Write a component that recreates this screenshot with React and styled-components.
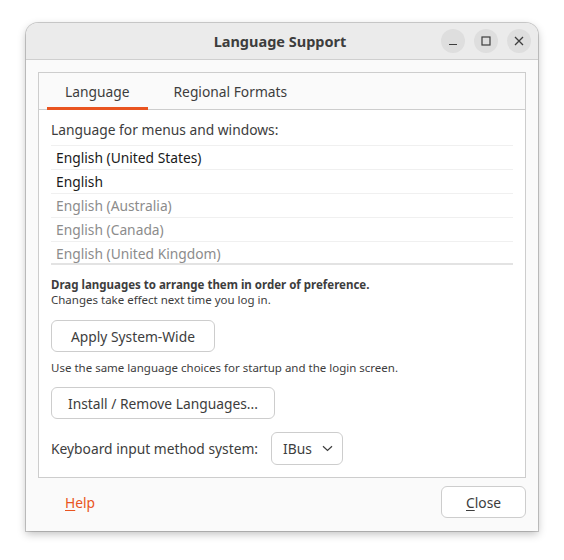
import styled, { createGlobalStyle } from "styled-components";

const GlobalStyle = createGlobalStyle`
  html, body {
    margin: 0;
    padding: 0;
    background: #ffffff;
  }
  body {
    font-family: "Noto Sans", "Open Sans", sans-serif;
    color: #3d3d3d;
  }
`;

const ACCENT = "#e95420";
const TEXT_SIZE = "13.8px";

const languages = [
  { name: "English (United States)", active: true },
  { name: "English", active: true },
  { name: "English (Australia)", active: false },
  { name: "English (Canada)", active: false },
  { name: "English (United Kingdom)", active: false },
];

const Page = styled.div`
  padding: 23px 26px 29px;
`;

const Window = styled.div`
  width: 512px;
  height: 508px;
  display: flex;
  flex-direction: column;
  background: #fafafa;
  border-radius: 12px 12px 0 0;
  box-shadow: 0 0 0 1px rgba(0, 0, 0, 0.18), 0 3px 9px rgba(0, 0, 0, 0.25);
  overflow: hidden;
`;

const HeaderBar = styled.div`
  position: relative;
  height: 37px;
  flex-shrink: 0;
  display: flex;
  align-items: center;
  justify-content: center;
  padding-right: 4px;
  padding-bottom: 1px;
  box-sizing: border-box;
  background: #ebebeb;
  border-bottom: 1px solid #cfcfcf;
`;

const Title = styled.div`
  font-size: 14.5px;
  font-weight: 700;
  color: #3d3d3d;
`;

const WindowControls = styled.div`
  position: absolute;
  right: 7px;
  top: 6px;
  display: flex;
  gap: 9px;
`;

const ControlButton = styled.div`
  width: 24px;
  height: 24px;
  border-radius: 50%;
  background: #dedede;
  display: flex;
  align-items: center;
  justify-content: center;
  color: #3d3d3d;
`;

const Body = styled.div`
  flex: 1;
  display: flex;
  flex-direction: column;
  padding: 12px 12px 0;
`;

const Notebook = styled.div`
  height: 406px;
  box-sizing: border-box;
  border: 1px solid #cdcdcd;
  display: flex;
  flex-direction: column;
`;

const TabBar = styled.div`
  height: 36px;
  display: flex;
  padding-left: 8px;
  border-bottom: 1px solid #cdcdcd;
  background: #fafafa;
`;

const Tab = styled.div`
  position: relative;
  display: flex;
  align-items: center;
  justify-content: center;
  padding: 0 ${(p) => p.$pad}px;
  font-size: ${TEXT_SIZE};
  color: #3d3d3d;

  &::after {
    content: "";
    position: absolute;
    left: 0;
    right: 0;
    bottom: -1px;
    height: 3px;
    background: ${(p) => (p.$active ? ACCENT : "transparent")};
  }
`;

const TabPage = styled.div`
  flex: 1;
  background: #ffffff;
  padding: 11px 12px 0;
  display: flex;
  flex-direction: column;
`;

const Label = styled.div`
  font-size: ${TEXT_SIZE};
  color: #3d3d3d;
  line-height: 18px;
`;

const LanguageList = styled.div`
  margin-top: 6px;
  height: 117px;
  overflow: hidden;
  border-top: 1px solid #f0f0f0;
  border-bottom: 2px solid #e3e3e3;
`;

const LanguageRow = styled.div`
  height: 23px;
  display: flex;
  align-items: center;
  padding-left: 5px;
  border-bottom: 1px solid #f0f0f0;
  font-size: ${TEXT_SIZE};
  color: ${(p) => (p.$active ? "#1a1a1a" : "#8c8c8c")};
`;

const Hint = styled.div`
  font-size: 11.5px;
  line-height: 15px;
  color: #3d3d3d;
  font-weight: ${(p) => (p.$bold ? 700 : 400)};
`;

const HintBlock = styled.div`
  margin-top: 12px;
`;

const Button = styled.button`
  align-self: flex-start;
  font-family: inherit;
  font-size: ${TEXT_SIZE};
  color: #3d3d3d;
  background: #ffffff;
  border: 1px solid #cdcdcd;
  border-radius: 6px;
  height: 32px;
  padding: 0 ${(p) => p.$pad || 16}px;
  margin-top: ${(p) => p.$top || 0}px;
`;

const Note = styled(Hint)`
  margin-top: 8px;
`;

const InputRow = styled.div`
  margin-top: 13px;
  display: flex;
  align-items: center;
  gap: 13px;
`;

const Combo = styled.div`
  height: 31px;
  padding: 0 9px 0 11px;
  display: flex;
  align-items: center;
  gap: 10px;
  border: 1px solid #cdcdcd;
  border-radius: 6px;
  background: #ffffff;
  font-size: ${TEXT_SIZE};
  color: #3d3d3d;
`;

const Footer = styled.div`
  flex: 1;
  display: flex;
  align-items: flex-start;
  justify-content: space-between;
  padding-top: 8px;
`;

const HelpLink = styled.div`
  margin: 7px 0 0 27px;
  font-size: ${TEXT_SIZE};
  color: ${ACCENT};

  u {
    text-decoration-thickness: 1px;
    text-underline-offset: 2px;
  }
`;

const CloseButton = styled(Button)`
  width: 85px;
  padding: 0;

  u {
    text-decoration-thickness: 1px;
    text-underline-offset: 2px;
  }
`;

const Chevron = () => (
  <svg width="11" height="7" viewBox="0 0 11 7" fill="none">
    <path d="M1 1.2 L5.5 5.5 L10 1.2" stroke="#3d3d3d" strokeWidth="1.2" />
  </svg>
);

export default function App() {
  return (
    <>
      <GlobalStyle />
      <Page>
        <Window>
          <HeaderBar>
            <Title>Language Support</Title>
            <WindowControls>
              <ControlButton>
                <svg width="10" height="10" viewBox="0 0 10 10">
                  <path d="M1 8.5 H9" stroke="#3d3d3d" strokeWidth="1.2" />
                </svg>
              </ControlButton>
              <ControlButton>
                <svg width="10" height="10" viewBox="0 0 10 10">
                  <rect x="1" y="1" width="8" height="8" fill="none" stroke="#3d3d3d" strokeWidth="1.2" />
                </svg>
              </ControlButton>
              <ControlButton>
                <svg width="10" height="10" viewBox="0 0 10 10">
                  <path d="M1 1 L9 9 M9 1 L1 9" stroke="#3d3d3d" strokeWidth="1.3" />
                </svg>
              </ControlButton>
            </WindowControls>
          </HeaderBar>
          <Body>
            <Notebook>
              <TabBar>
                <Tab $active $pad={18}>Language</Tab>
                <Tab $pad={26}>Regional Formats</Tab>
              </TabBar>
              <TabPage>
                <Label>Language for menus and windows:</Label>
                <LanguageList>
                  {languages.map((l) => (
                    <LanguageRow key={l.name} $active={l.active}>
                      {l.name}
                    </LanguageRow>
                  ))}
                </LanguageList>
                <HintBlock>
                  <Hint $bold>Drag languages to arrange them in order of preference.</Hint>
                  <Hint>Changes take effect next time you log in.</Hint>
                </HintBlock>
                <Button $top={13} $pad={19}>Apply System-Wide</Button>
                <Note>Use the same language choices for startup and the login screen.</Note>
                <Button $top={12}>Install / Remove Languages...</Button>
                <InputRow>
                  <Label>Keyboard input method system:</Label>
                  <Combo>
                    IBus
                    <Chevron />
                  </Combo>
                </InputRow>
              </TabPage>
            </Notebook>
            <Footer>
              <HelpLink>
                <u>H</u>elp
              </HelpLink>
              <CloseButton>
                <u>C</u>lose
              </CloseButton>
            </Footer>
          </Body>
        </Window>
      </Page>
    </>
  );
}
